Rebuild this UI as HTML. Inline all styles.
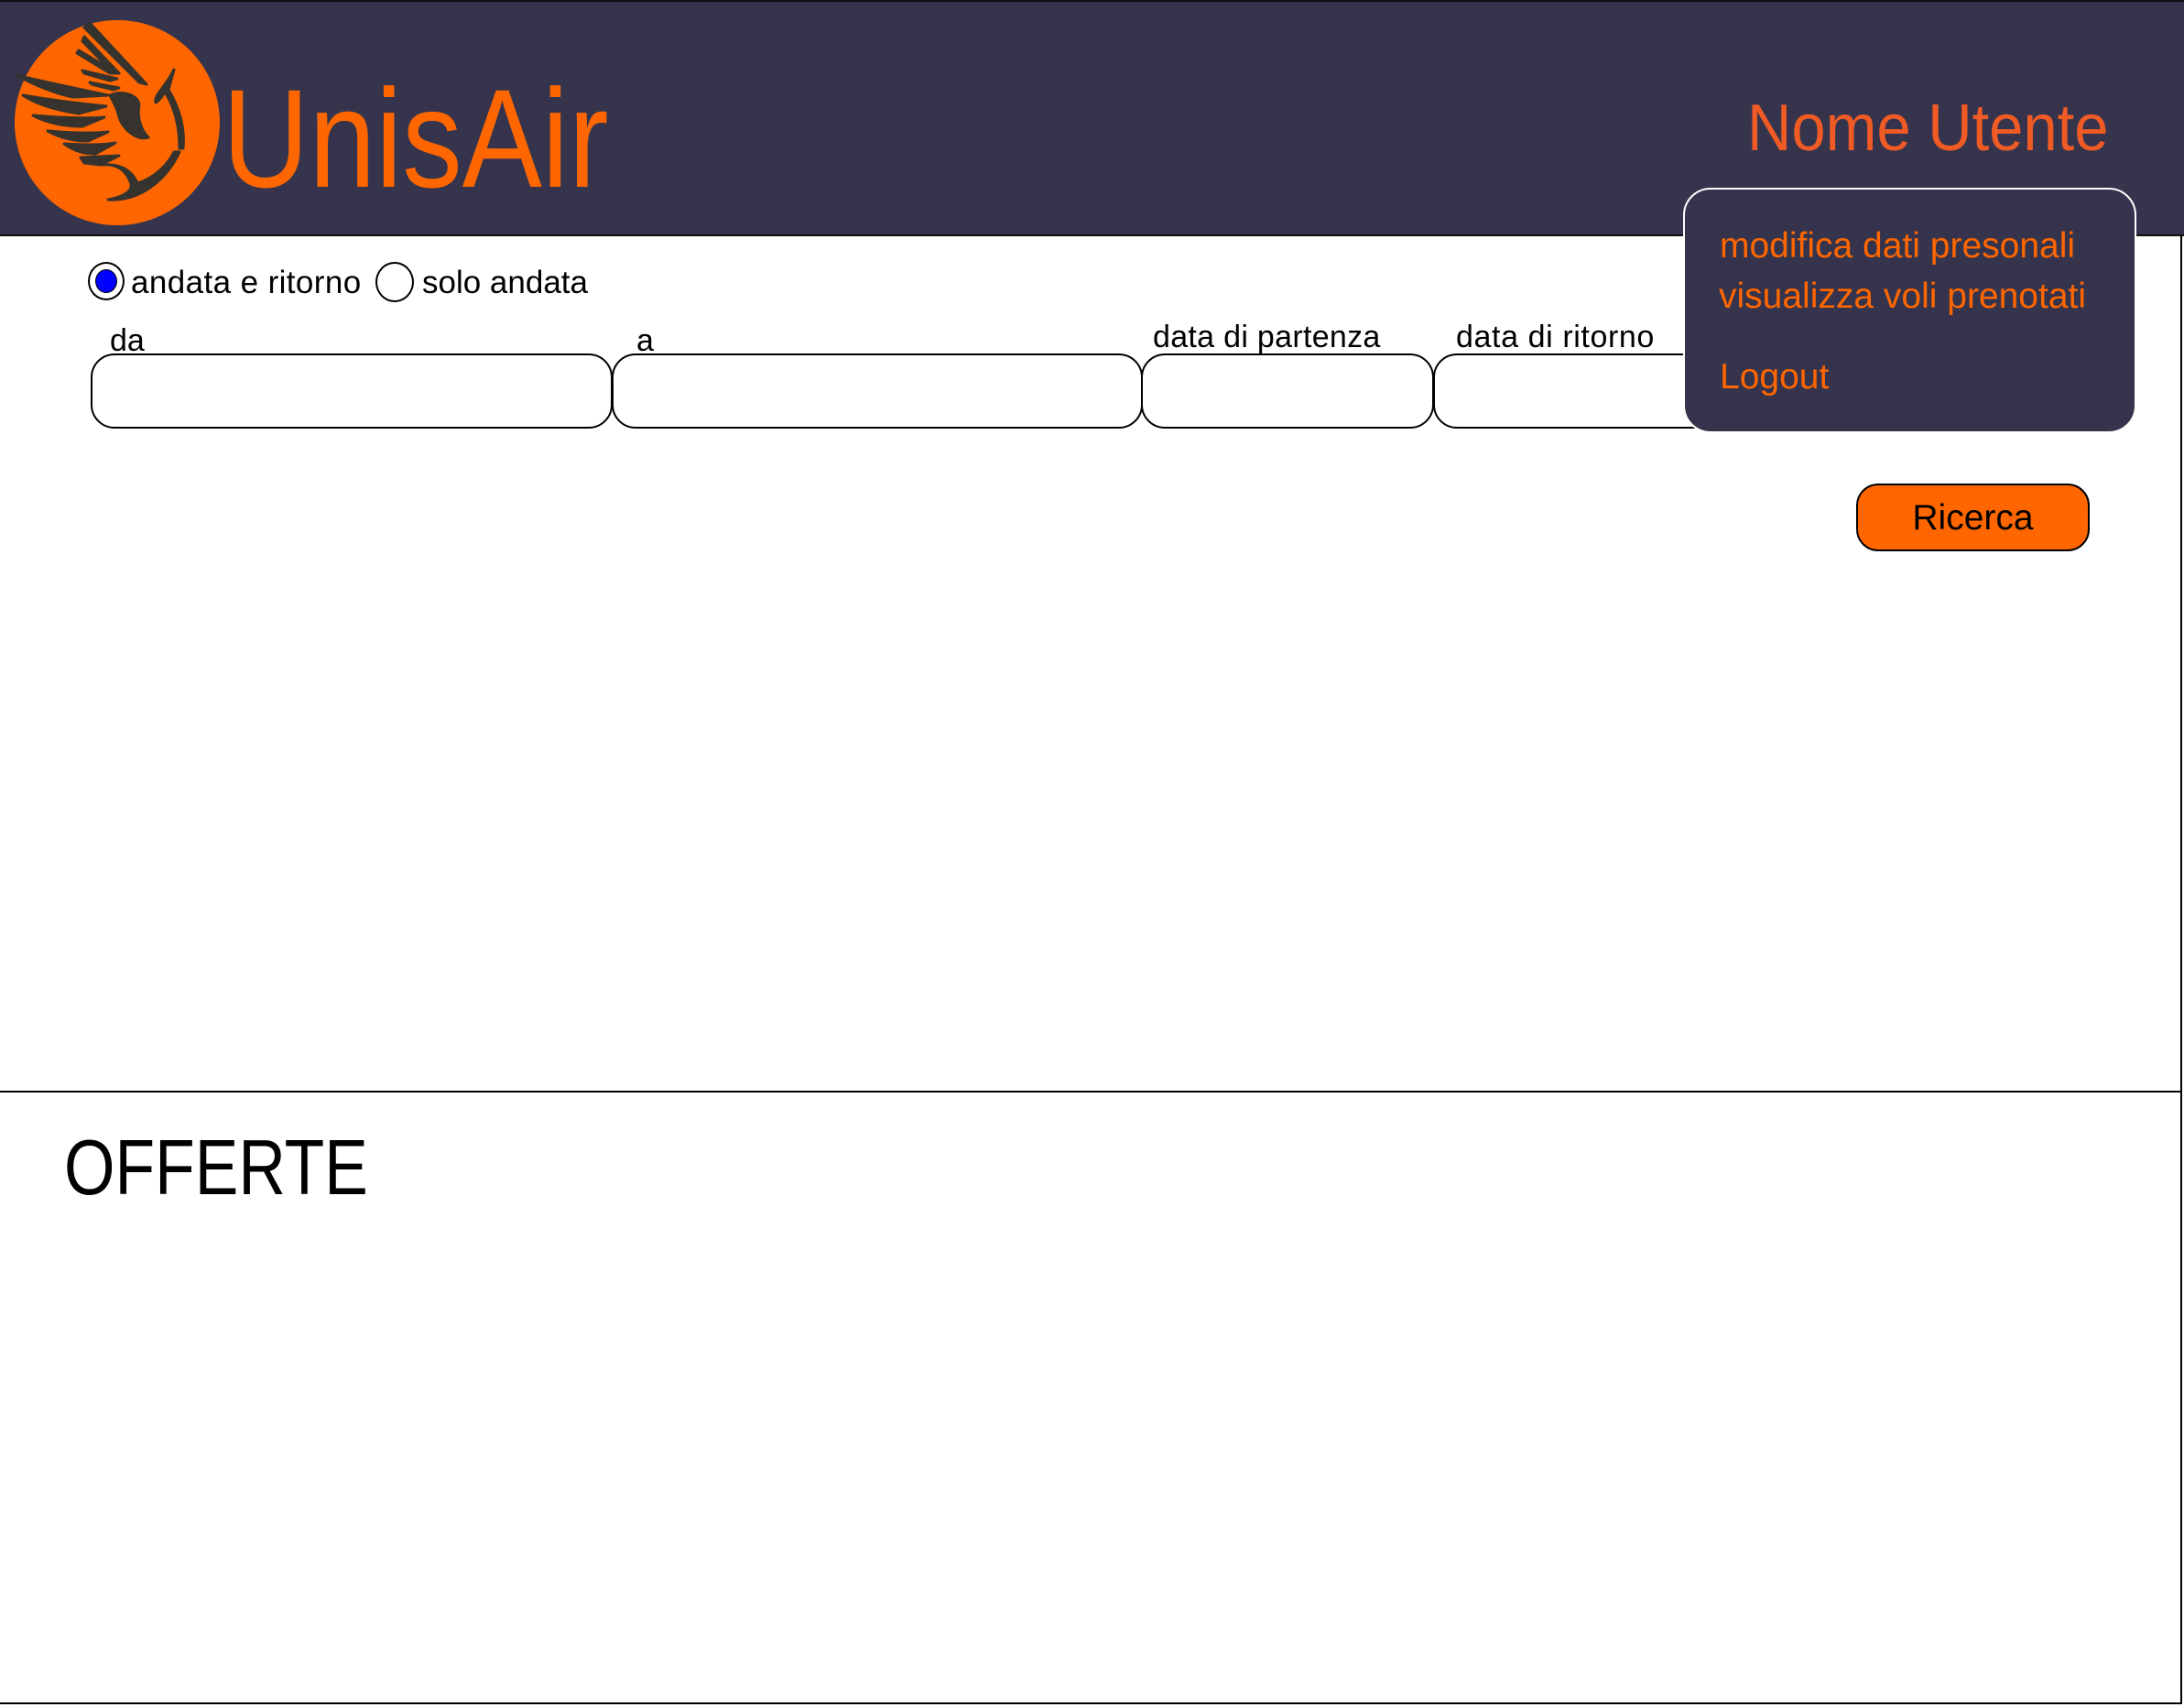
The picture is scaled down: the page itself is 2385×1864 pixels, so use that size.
<!DOCTYPE html>
<html><head><meta charset="utf-8"><style>
html,body{margin:0;padding:0;}
body{width:2385px;height:1864px;position:relative;background:#fff;overflow:hidden;font-family:"Liberation Sans",sans-serif;}
.a{position:absolute;line-height:1;white-space:nowrap;}
.hdr{position:absolute;left:0;top:0;width:2385px;height:254px;background:#35344c;border-top:2px solid #111;border-bottom:2px solid #111;}
.box{position:absolute;top:386px;border:2px solid #000;border-radius:26px;background:#fff;box-sizing:border-box;height:82px;}
.lbl{font-size:34px;color:#000;}
.menu{position:absolute;left:1838px;top:205px;width:495px;height:268px;background:#35344c;border:2px solid #fff;border-radius:30px;box-sizing:border-box;}
.mi{font-size:39px;color:#ff6600;}
</style></head><body>
<div class="hdr"></div>
<svg class="a" style="left:0;top:0" width="260" height="256" viewBox="0 0 260 256">
<circle cx="128" cy="134" r="112" fill="#ff6600"/>
<g fill="#36332e" stroke="#36332e" stroke-width="3" stroke-linejoin="round">
<path d="M98 25 L160 92 L152 90 L92 30 Z"/>
<path d="M92 40 L130 80 L124 80 L90 45 Z"/>
<path d="M86 55 L128 80 L120 80 L84 58 Z"/>
<path d="M90 77 L128 86 L120 88 L92 80 Z"/>
<path d="M98 90 L130 96 L124 98 L100 92 Z"/>
<path d="M18 82 C50 90 90 98 118 104 L80 106 C60 102 40 94 18 82 Z"/>
<path d="M25 104 C60 110 95 114 116 116 L86 124 C60 120 40 114 25 104 Z"/>
<path d="M36 126 C60 128 90 130 114 128 L90 138 C70 138 50 134 36 126 Z"/>
<path d="M52 143 C75 145 100 146 118 144 L96 154 C80 154 64 150 52 143 Z"/>
<path d="M70 157 C90 158 110 159 126 156 L104 168 C90 168 80 164 70 157 Z"/>
<path d="M88 172 L130 170 L110 180 L92 178 Z"/>
<path d="M120 104 C135 98 150 104 152 114 C150 126 152 140 162 150 C150 154 135 142 130 128 C128 118 124 112 120 104 Z"/>
<path d="M190 76 C180 96 168 104 170 112 C176 108 178 104 180 100 C192 120 196 140 196 162 L200 162 C202 140 196 118 184 98 C186 90 188 84 190 76 Z"/>
<path d="M110 180 C130 178 138 188 142 198 C146 206 140 214 118 218 C150 220 180 200 196 166 L190 166 C180 186 160 198 150 200 C146 190 136 178 110 180 Z"/>
</g>
</svg>
<div class="a" style="left:243px;top:75px;font-size:153px;color:#ff6600;transform:scaleX(0.855);transform-origin:0 0;">UnisAir</div>
<div class="a" style="left:1908px;top:104px;font-size:72px;color:#f05a24;transform:scaleX(0.93);transform-origin:0 0;">Nome Utente</div>

<div class="a" style="left:2381px;top:256px;width:2px;height:1605px;background:#000;"></div>
<div class="a" style="left:0;top:1859px;width:2383px;height:2px;background:#000;"></div>
<div class="a" style="left:0;top:1191px;width:2383px;height:2px;background:#000;"></div>

<div class="a" style="left:96px;top:286px;width:40px;height:42px;border:2px solid #000;border-radius:50%;box-sizing:border-box;"></div>
<div class="a" style="left:104px;top:294px;width:24px;height:26px;border:1.5px solid #000;background:#0000ff;border-radius:50%;box-sizing:border-box;"></div>
<div class="a lbl" style="left:143px;top:291px;font-size:35px;letter-spacing:0.4px;">andata e ritorno</div>
<div class="a" style="left:410px;top:286px;width:42px;height:44px;border:2px solid #000;border-radius:50%;box-sizing:border-box;"></div>
<div class="a lbl" style="left:461px;top:291px;font-size:35px;">solo andata</div>

<div class="a lbl" style="left:120px;top:355px;">da</div>
<div class="a lbl" style="left:695px;top:355px;">a</div>
<div class="a lbl" style="left:1259px;top:351px;letter-spacing:0.3px;">data di partenza</div>
<div class="a lbl" style="left:1590px;top:351px;letter-spacing:0.6px;">data di ritorno</div>

<div class="box" style="left:99px;width:570px;"></div>
<div class="box" style="left:668px;width:580px;"></div>
<div class="box" style="left:1246px;width:320px;"></div>
<div class="box" style="left:1565px;width:330px;"></div>

<div class="menu"></div>
<div class="a mi" style="left:1878px;top:249px;">modifica dati presonali</div>
<div class="a mi" style="left:1877px;top:304px;">visualizza voli prenotati</div>
<div class="a mi" style="left:1878px;top:392px;">Logout</div>

<div class="a" style="left:2027px;top:528px;width:255px;height:74px;background:#ff6600;border:2px solid #000;border-radius:24px;box-sizing:border-box;"></div>
<div class="a" style="left:2027px;top:546px;width:255px;text-align:center;font-size:39px;color:#000;">Ricerca</div>

<div class="a" style="left:70px;top:1233px;font-size:85px;color:#000;transform:scaleX(0.84);transform-origin:0 0;">OFFERTE</div>
</body></html>
